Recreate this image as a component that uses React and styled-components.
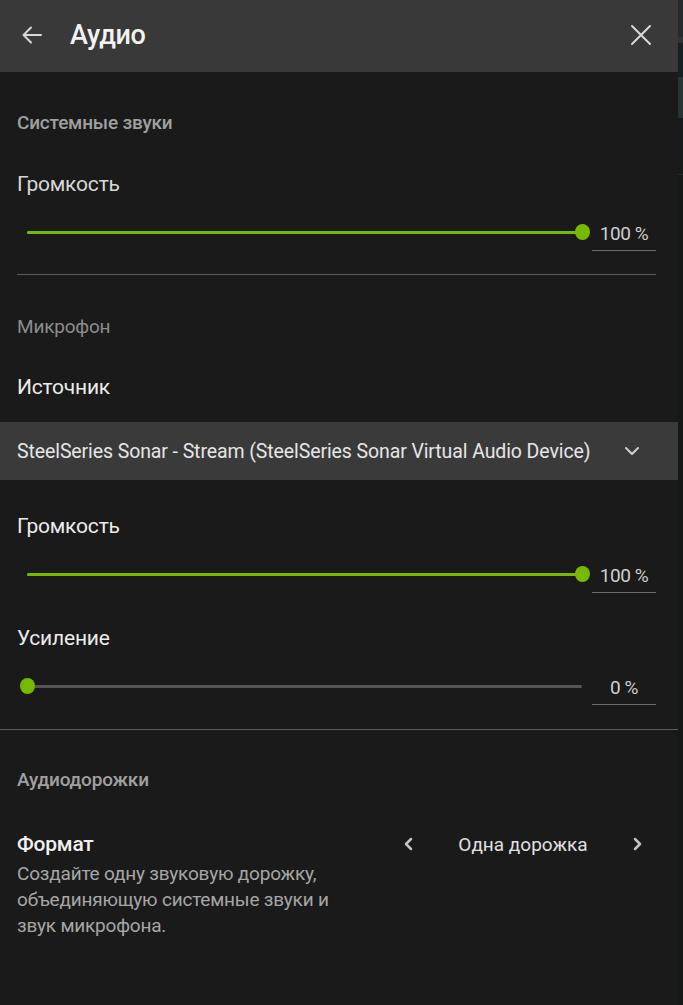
import React from "react";
import styled, { createGlobalStyle } from "styled-components";

const GlobalStyle = createGlobalStyle`
  html, body {
    margin: 0;
    padding: 0;
    background: #161818;
  }
  body {
    font-family: Roboto, "Liberation Sans", sans-serif;
  }
`;

const Page = styled.div`
  display: flex;
  width: 683px;
  height: 1005px;
  overflow: hidden;
`;

const Panel = styled.div`
  width: 678px;
  flex-shrink: 0;
  background: #1a1a1a;
  display: flex;
  flex-direction: column;
`;

const Edge = styled.div`
  flex: 1;
  display: flex;
  flex-direction: column;
  background: #161818;
`;

const EdgeBand = styled.div`
  height: ${(p) => p.h}px;
  background: ${(p) => p.c};
`;

const Header = styled.header`
  height: 72px;
  box-sizing: border-box;
  background: #393939;
  display: flex;
  align-items: center;
  padding: 0 26px 3px 20px;
  color: #f0f0f0;
`;

const IconBtn = styled.button`
  background: none;
  border: none;
  padding: 0;
  display: flex;
  color: #d8d8d8;
  cursor: pointer;
`;

const Title = styled.h1`
  margin: 0 0 0 26px;
  font-size: 27px;
  font-weight: 500;
  letter-spacing: -0.3px;
  flex: 1;
  color: #f2f2f2;
`;

const Body = styled.div`
  display: flex;
  flex-direction: column;
  padding-top: 30px;
`;

const SectionLabel = styled.div`
  height: 40px;
  display: flex;
  align-items: center;
  padding: 0 17px;
  margin-top: ${(p) => p.mt || 0}px;
  font-size: 19px;
  font-weight: ${(p) => (p.light ? 400 : 500)};
  letter-spacing: -0.2px;
  color: ${(p) => (p.light ? "#8c8c8c" : "#a0a0a0")};
`;

const FieldLabel = styled.div`
  height: 40px;
  display: flex;
  align-items: center;
  padding: 0 17px;
  margin-top: ${(p) => p.mt || 0}px;
  font-size: 21px;
  letter-spacing: -0.2px;
  color: ${(p) => p.color || "#ececec"};
`;

const SliderRow = styled.div`
  height: 40px;
  margin-top: 8px;
  padding: 0 22px 0 20px;
  display: flex;
  align-items: center;
`;

const Track = styled.div`
  position: relative;
  flex: 1;
  height: 3px;
  margin: 0 7px;
  background: #555555;
  border-radius: 2px;
`;

const Fill = styled.div`
  height: 100%;
  background: #76b900;
  border-radius: 2px;
`;

const Thumb = styled.div`
  position: absolute;
  top: 50%;
  width: 15px;
  height: 16px;
  margin-left: -7px;
  margin-top: -8px;
  border-radius: 50%;
  background: #76b900;
`;

const ValueBox = styled.div`
  width: 64px;
  height: 34px;
  margin-left: 3px;
  margin-top: 4px;
  box-sizing: border-box;
  border-bottom: 1px solid #6e6e6e;
  display: flex;
  align-items: center;
  justify-content: center;
  font-size: 19px;
  color: #cfcfcf;
  letter-spacing: -0.4px;
`;

const Divider = styled.hr`
  border: none;
  height: 1px;
  background: #5c5c5c;
  margin: ${(p) => p.mt}px ${(p) => (p.full ? 0 : 22)}px 0 ${(p) => (p.full ? 0 : 17)}px;
`;

const Dropdown = styled.div`
  height: 58px;
  margin-top: 15px;
  background: #3a3a3a;
  display: flex;
  align-items: center;
  justify-content: space-between;
  padding: 0 38px 0 17px;
  font-size: 19.5px;
  letter-spacing: -0.1px;
  color: #e6e6e6;
`;

const FormatRow = styled.div`
  display: flex;
  justify-content: space-between;
  padding: 0 34px 0 17px;
  margin-top: 32px;
`;

const FormatText = styled.div`
  width: 345px;
`;

const FormatTitle = styled.div`
  font-size: 21px;
  line-height: 26px;
  font-weight: 500;
  letter-spacing: -0.2px;
  color: #f0f0f0;
`;

const FormatDesc = styled.p`
  margin: 4px 0 0;
  font-size: 19px;
  line-height: 26px;
  letter-spacing: -0.2px;
  color: #a6a6a6;
`;

const Selector = styled.div`
  height: 26px;
  width: 242px;
  display: flex;
  align-items: center;
  justify-content: space-between;
  color: #e0e0e0;
  font-size: 19px;
`;

const Arrow = ({ d }) => (
  <svg width="14" height="16" viewBox="0 0 14 16" fill="none" stroke="#c4c4c4" strokeWidth="2.5" strokeLinecap="round" strokeLinejoin="round">
    <path d={d} />
  </svg>
);

function Slider({ value }) {
  return (
    <SliderRow>
      <Track>
        <Fill style={{ width: `${value}%` }} />
        <Thumb style={{ left: `${value}%` }} />
      </Track>
      <ValueBox>{value} %</ValueBox>
    </SliderRow>
  );
}

export default function App() {
  return (
    <>
      <GlobalStyle />
      <Page>
        <Panel>
          <Header>
            <IconBtn aria-label="Назад">
              <svg width="24" height="24" viewBox="0 0 24 24" fill="none" stroke="currentColor" strokeWidth="2" strokeLinecap="round" strokeLinejoin="round">
                <path d="M21 12H3.5M11 4.5L3.5 12l7.5 7.5" />
              </svg>
            </IconBtn>
            <Title>Аудио</Title>
            <IconBtn aria-label="Закрыть">
              <svg width="22" height="22" viewBox="0 0 22 22" fill="none" stroke="currentColor" strokeWidth="2" strokeLinecap="round">
                <path d="M2 2l18 18M20 2L2 20" />
              </svg>
            </IconBtn>
          </Header>
          <Body>
            <SectionLabel>Системные звуки</SectionLabel>
            <FieldLabel mt={22} color="#d8d8d8">Громкость</FieldLabel>
            <Slider value={100} />
            <Divider mt={22} />
            <SectionLabel mt={31} light>Микрофон</SectionLabel>
            <FieldLabel mt={21}>Источник</FieldLabel>
            <Dropdown>
              <span>SteelSeries Sonar - Stream (SteelSeries Sonar Virtual Audio Device)</span>
              <svg width="16" height="10" viewBox="0 0 16 10" fill="none" stroke="#cfcfcf" strokeWidth="2" strokeLinecap="round" strokeLinejoin="round">
                <path d="M2 2l6 6 6-6" />
              </svg>
            </Dropdown>
            <FieldLabel mt={26}>Громкость</FieldLabel>
            <Slider value={100} />
            <FieldLabel mt={24}>Усиление</FieldLabel>
            <Slider value={0} />
            <Divider mt={23} full />
            <SectionLabel mt={29}>Аудиодорожки</SectionLabel>
            <FormatRow>
              <FormatText>
                <FormatTitle>Формат</FormatTitle>
                <FormatDesc>
                  Создайте одну звуковую дорожку, объединяющую системные звуки и звук микрофона.
                </FormatDesc>
              </FormatText>
              <Selector>
                <Arrow d="M9 3L4 8l5 5" />
                <span>Одна дорожка</span>
                <Arrow d="M5 3l5 5-5 5" />
              </Selector>
            </FormatRow>
          </Body>
        </Panel>
        <Edge>
          <EdgeBand h={37} c="#222a2c" />
          <EdgeBand h={6} c="#2c3434" />
          <EdgeBand h={34} c="#162022" />
          <EdgeBand h={41} c="#2a3333" />
          <EdgeBand h={56} c="#171a1b" />
          <EdgeBand h={1} c="#2a2c2c" />
        </Edge>
      </Page>
    </>
  );
}
